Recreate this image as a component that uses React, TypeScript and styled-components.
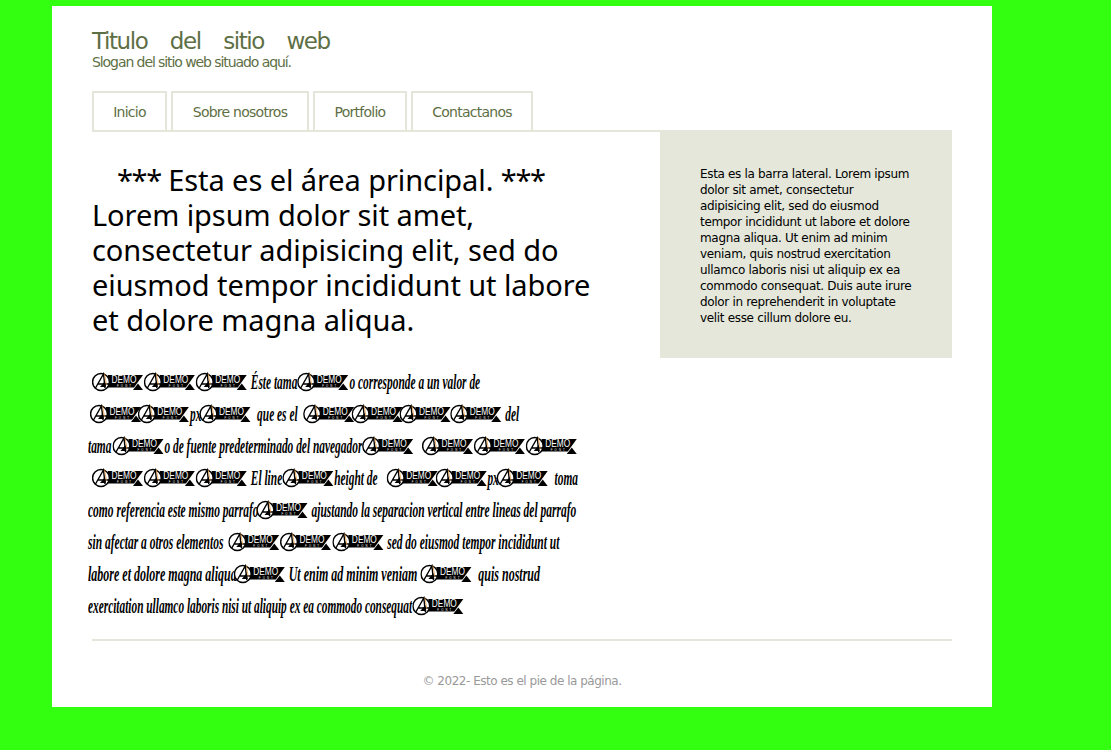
import React from "react";
import styled, { createGlobalStyle } from "styled-components";

const GlobalStyle = createGlobalStyle`
  html, body {
    margin: 0;
    padding: 0;
    background: #33ff11;
  }
  body {
    font-family: "DejaVu Sans", Verdana, sans-serif;
  }
`;

const Page = styled.div`
  width: 940px;
  height: 701px;
  margin: 6px 0 0 52px;
  padding: 0 40px;
  box-sizing: border-box;
  background: #fff;
  display: flex;
  flex-direction: column;
  overflow: hidden;
`;

const Header = styled.header`
  padding-top: 22px;
  color: #5e6f45;
`;

const SiteTitle = styled.h1`
  margin: 0;
  font-size: 23px;
  line-height: 26px;
  font-weight: 400;
  letter-spacing: -1.4px;
  word-spacing: 16.5px;
`;

const Slogan = styled.p`
  margin: 0;
  font-size: 14px;
  line-height: 16px;
  letter-spacing: -1.08px;
`;

const Nav = styled.nav`
  display: flex;
  gap: 4px;
  margin-top: 21px;
  border-bottom: 2px solid #e4e6da;
`;

const NavItem = styled.a<{ $w: number }>`
  width: ${(p) => p.$w}px;
  height: 39px;
  box-sizing: border-box;
  padding-top: 1px;
  border: 2px solid #e4e6da;
  border-bottom: 0;
  display: flex;
  align-items: center;
  justify-content: center;
  font-size: 14px;
  letter-spacing: -0.75px;
  color: #5e6f45;
`;

const Columns = styled.div`
  display: flex;
  justify-content: space-between;
  margin-top: -2px;
  height: 509px;
`;

const Main = styled.main`
  width: 528px;
  padding-top: 32px;
`;

const Lead = styled.p`
  margin: 0 0 29px;
  font-family: "Noto Sans", sans-serif;
  font-size: 29px;
  line-height: 35px;
  letter-spacing: -0.08px;
  text-indent: 25px;
  color: #000;
`;

const Stars = styled.span`
  letter-spacing: -1.4px;
`;

const Sidebar = styled.aside`
  width: 292px;
  height: 228px;
  box-sizing: border-box;
  padding: 36px 40px;
  background: #e4e7da;
  font-size: 12px;
  line-height: 16px;
  letter-spacing: -0.33px;
  color: #000;
`;

// the whole line is squeezed to get the narrow script look, marks are widened to compensate
const Line = styled.div<{ $shift: number; $squeeze: number }>`
  height: 32px;
  width: max-content;
  display: flex;
  align-items: center;
  white-space: pre;
  margin-left: ${(p) => p.$shift}px;
  transform: scaleX(${(p) => p.$squeeze});
  transform-origin: left center;
  font-family: "Liberation Serif", serif;
  font-style: italic;
  font-weight: 700;
  font-size: 20px;
  color: #000;
`;

const Footer = styled.footer`
  border-top: 2px solid #e4e6da;
  padding-top: 32px;
  text-align: center;
  font-size: 12px;
  line-height: 16px;
  letter-spacing: -0.48px;
  color: #999;
`;

const MarkSvg = styled.svg<{ $w: number; $nudge: number }>`
  flex: none;
  width: ${(p) => p.$w}px;
  height: 22px;
  margin-left: ${(p) => p.$nudge}px;
`;

const MarkText = styled.text`
  font-family: "Liberation Sans", sans-serif;
  font-style: normal;
  font-weight: 400;
  fill: #fff;
`;

const Mark = ({ squeeze, nudge }: { squeeze: number; nudge: number }) => (
  <MarkSvg viewBox="0 0 52 22" preserveAspectRatio="none" $w={52 / squeeze} $nudge={nudge / squeeze}>
    <polygon points="16,4 51,4 42,16.6 16,16.6" fill="#000" />
    <polygon points="41,19 51,19 46,12.5" fill="#000" />
    <circle cx="9" cy="11" r="8.4" fill="#fff" stroke="#000" strokeWidth="1.5" />
    <path d="M3.5 17 L11.5 3 L13 17 M6 13 L17 13" fill="none" stroke="#000" strokeWidth="1.4" />
    <polygon points="8,16 13,10 14,16" fill="#000" />
    <path d="M12.5 2.6 L14.5 14" fill="none" stroke="#e8912c" strokeWidth="0.7" />
    <MarkText x="19.5" y="12.4" fontSize="10.5" textLength="25" lengthAdjust="spacingAndGlyphs">DEMO</MarkText>
    <MarkText x="25" y="15.6" fontSize="2.8" textLength="14">FONT</MarkText>
  </MarkSvg>
);

// a number is a mark, its value a small correction of its left edge
type Piece = string | number;

const lines: { shift: number; squeeze: number; pieces: Piece[] }[] = [
  { shift: 0, squeeze: 0.57, pieces: [0, 0, 0, " Éste tama", 0, "o corresponde a un valor de"] },
  { shift: -2, squeeze: 0.57, pieces: [0, -4, "px", -2, "  que es el ", 3, -4, -4, -1, " del"] },
  { shift: -4, squeeze: 0.57, pieces: ["tama", 1, "o de fuente predeterminado del navegador", 0, "  ", 2, 0, 0] },
  { shift: 0, squeeze: 0.57, pieces: [0, 0, 0, " El line", 0, "height de ", 6, -3, "px", -2, "  toma"] },
  { shift: -4, squeeze: 0.575, pieces: ["como referencia este mismo parrafo", -2, " ajustando la separacion vertical entre lineas del parrafo"] },
  { shift: -4, squeeze: 0.575, pieces: ["sin afectar a otros elementos ", 2, 0, 0, " sed do eiusmod tempor incididunt ut"] },
  { shift: -4, squeeze: 0.6, pieces: ["labore et dolore magna aliqua", -3, " Ut enim ad minim veniam", 3, "  quis nostrud"] },
  { shift: -4, squeeze: 0.567, pieces: ["exercitation ullamco laboris nisi ut aliquip ex ea commodo consequat", 0] },
];

const tabs = [
  { label: "Inicio", w: 75 },
  { label: "Sobre nosotros", w: 138 },
  { label: "Portfolio", w: 94 },
  { label: "Contactanos", w: 122 },
];

export default function App() {
  return (
    <>
      <GlobalStyle />
      <Page>
        <Header>
          <SiteTitle>Titulo del sitio web</SiteTitle>
          <Slogan>Slogan del sitio web situado aquí.</Slogan>
        </Header>
        <Nav>
          {tabs.map((t) => (
            <NavItem key={t.label} $w={t.w}>{t.label}</NavItem>
          ))}
        </Nav>
        <Columns>
          <Main>
            <Lead>
              <Stars>***</Stars> Esta es el área principal. <Stars>***</Stars> Lorem ipsum dolor sit amet, consectetur adipisicing elit, sed do eiusmod tempor incididunt ut labore et dolore magna aliqua.
            </Lead>
            {lines.map((l, i) => (
              <Line key={i} $shift={l.shift} $squeeze={l.squeeze}>
                {l.pieces.map((p, j) =>
                  typeof p === "number" ? <Mark key={j} squeeze={l.squeeze} nudge={p} /> : <span key={j}>{p}</span>
                )}
              </Line>
            ))}
          </Main>
          <Sidebar>
            Esta es la barra lateral. Lorem ipsum dolor sit amet, consectetur adipisicing elit, sed do eiusmod tempor incididunt ut labore et dolore magna aliqua. Ut enim ad minim veniam, quis nostrud exercitation ullamco laboris nisi ut aliquip ex ea commodo consequat. Duis aute irure dolor in reprehenderit in voluptate velit esse cillum dolore eu.
          </Sidebar>
        </Columns>
        <Footer>© 2022- Esto es el pie de la página.</Footer>
      </Page>
    </>
  );
}
